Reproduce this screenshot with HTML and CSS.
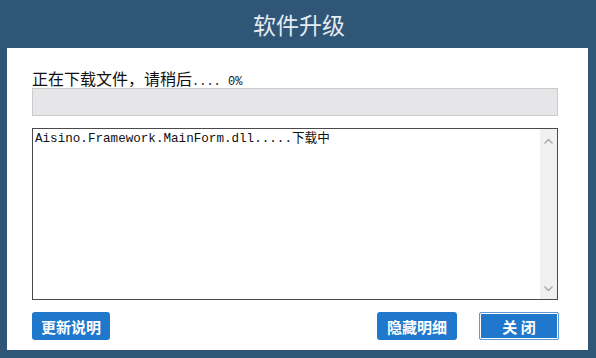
FILE: index.html
```html
<!DOCTYPE html>
<html lang="zh-CN">
<head>
    <meta charset="UTF-8">
    <title>软件升级</title>
    <link rel="stylesheet" href="styles.css">
</head>

<body>
    <header class="titlebar">
        <h1>软件升级</h1>
    </header>

    <main class="panel">
        <p class="status">正在下载文件，请稍后<span class="pct">.... 0%</span></p>
        <div class="progress"></div>

        <section class="log">
            <div class="logText">Aisino.Framework.MainForm.dll.....下载中</div>
            <div class="scrollbar">
                <svg class="arrow" width="17" height="17" viewBox="0 0 17 17">
                    <polyline points="4.5,10.5 8.5,6.5 12.5,10.5" fill="none" stroke="#a6a6a6" stroke-width="1.3"/>
                </svg>
                <svg class="arrow" width="17" height="17" viewBox="0 0 17 17">
                    <polyline points="4.5,6.5 8.5,10.5 12.5,6.5" fill="none" stroke="#a6a6a6" stroke-width="1.3"/>
                </svg>
            </div>
        </section>

        <footer class="buttons">
            <button class="knap">更新说明</button>
            <button class="knap skjul">隐藏明细</button>
            <button class="knap luk">关 闭</button>
        </footer>
    </main>
</body>
</html>
```

FILE: styles.css
```css
body {
    margin: 0;
    width: 596px;
    height: 358px;
    background-color: #2f5677;
    font-family: "Noto Sans CJK SC", sans-serif;
    overflow: hidden;
}

.titlebar {
    height: 48px;
    display: flex;
    align-items: center;
    justify-content: center;
}

h1 {
    margin: 0;
    padding-left: 2px;
    font-size: 23px;
    font-weight: normal;
    color: #e3ebf1;
    line-height: 1;
}

.panel {
    margin: 0 8px 0 7px;
    height: 302px;
    box-sizing: border-box;
    background-color: white;
    padding: 21px 30px 10px 25px;
    display: flex;
    flex-direction: column;
}

.status {
    margin: 0;
    height: 19px;
    font-size: 16px;
    line-height: 19px;
    color: #111;
}

.pct {
    font-family: "Liberation Mono", monospace;
    font-size: 12px;
}

.progress {
    height: 28px;
    box-sizing: border-box;
    background-color: #e6e5e8;
    border: 1px solid #cbcbcb;
}

.log {
    margin-top: 12px;
    height: 172px;
    box-sizing: border-box;
    border: 1px solid #4a4a4a;
    display: flex;
}

.logText {
    flex: 1;
    padding: 3px 2px;
    font-family: "Liberation Mono", "Noto Sans CJK SC", monospace;
    font-size: 12.6px;
    line-height: 14px;
    color: #111;
}

.scrollbar {
    width: 17px;
    background-color: #f0f0f0;
    display: flex;
    flex-direction: column;
    justify-content: space-between;
    padding: 4px 0 2px;
}

.buttons {
    margin-top: 12px;
    display: flex;
}

.knap {
    height: 28px;
    width: 78px;
    padding: 0;
    border: none;
    border-radius: 3px;
    background-color: #1f78cb;
    color: white;
    font-family: "Noto Sans CJK SC", sans-serif;
    font-size: 15px;
    font-weight: bold;
    cursor: pointer;
}

.skjul {
    margin-left: auto;
    width: 80px;
}

.luk {
    margin-left: 22px;
    width: 80px;
    margin-right: -1px;
    border-radius: 2px;
    border: 1px solid #5e9ad4;
    box-shadow: inset 0 0 0 1px white;
}
```
